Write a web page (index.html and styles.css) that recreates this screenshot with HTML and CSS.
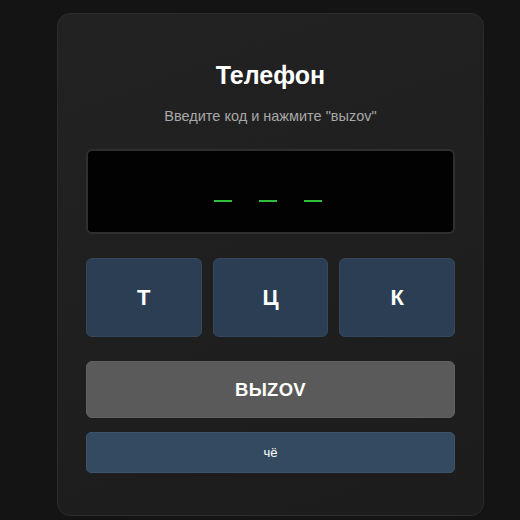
FILE: index.html
```html
<!DOCTYPE html>
<html lang="ru">
<head>
<meta charset="utf-8">
<link rel="stylesheet" href="styles.css">
</head>
<body>
<div class="card">
  <h1 class="title">Телефон</h1>
  <p class="hint">Введите код и нажмите "выzov"</p>
  <div class="display">
    <span class="dash"></span><span class="dash"></span><span class="dash"></span>
  </div>
  <div class="keys">
    <button class="key">Т</button>
    <button class="key">Ц</button>
    <button class="key">К</button>
  </div>
  <button class="call">ВЫZOV</button>
  <button class="what">чё</button>
</div>
</body>
</html>
```
FILE: styles.css
```css
html, body { margin: 0; padding: 0; }
body {
  width: 520px; height: 520px; overflow: hidden;
  background: #141414;
  font-family: "Liberation Sans", Arial, sans-serif;
  color: #fff;
}
.card {
  box-sizing: border-box;
  margin: 13px 0 0 57px;
  width: 427px; height: 503px;
  background: linear-gradient(160deg, #222 0%, #1d1c1d 100%);
  border: 1px solid #2c2c2c;
  border-radius: 13px;
  padding: 46px 28px 0;
  display: flex; flex-direction: column;
}
.title {
  margin: 0; text-align: center;
  font-size: 25px; line-height: 30px; font-weight: bold;
}
.hint {
  margin: 18px 0 0; text-align: center;
  font-size: 14.5px; line-height: 16px; color: #a8a8a8;
}
.display {
  margin-top: 25px; height: 85px; box-sizing: border-box;
  background: #020202; border: 2px solid #2f2f2f; border-radius: 6px;
  display: flex; justify-content: center; align-items: center; gap: 27px;
  padding: 18px 6px 0 0;
}
.dash { width: 18px; height: 2px; background: #2fbf3a; }
.keys {
  margin-top: 24px; display: grid; grid-template-columns: repeat(3, 1fr); gap: 11px;
}
button {
  font-family: inherit; color: #fff; border: none; cursor: pointer; margin: 0;
}
.key {
  height: 79px; background: #2b3e53; border: 1px solid #34475b; border-radius: 6px;
  font-size: 22px; font-weight: bold;
}
.call {
  margin-top: 24px; height: 57px; background: #5a5a5a; border: 1px solid #626262;
  border-radius: 6px; font-size: 18.5px; font-weight: bold; letter-spacing: 0.3px;
}
.what {
  margin-top: 14px; height: 41px; background: #344a60; border: 1px solid #3d536a;
  border-radius: 5px; font-size: 13px;
}
```
